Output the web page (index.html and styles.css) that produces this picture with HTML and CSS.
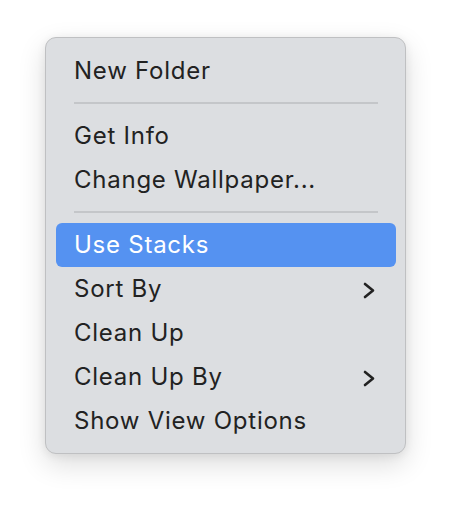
FILE: index.html
```html
<!DOCTYPE html>
<html lang="en">
<head>
<meta charset="utf-8">
<title>Context Menu</title>
<link rel="stylesheet" href="styles.css">
</head>
<body>
<div class="menu">
  <div class="item">New Folder</div>
  <div class="sep"></div>
  <div class="item">Get Info</div>
  <div class="item">Change Wallpaper...</div>
  <div class="sep"></div>
  <div class="item active">Use Stacks</div>
  <div class="item">Sort By
    <svg class="chev" width="12" height="17" viewBox="0 0 12 17"><polyline points="2,2 10,8.5 2,15" fill="none" stroke="currentColor" stroke-width="2.6" stroke-linecap="round" stroke-linejoin="round"/></svg>
  </div>
  <div class="item">Clean Up</div>
  <div class="item">Clean Up By
    <svg class="chev" width="12" height="17" viewBox="0 0 12 17"><polyline points="2,2 10,8.5 2,15" fill="none" stroke="currentColor" stroke-width="2.6" stroke-linecap="round" stroke-linejoin="round"/></svg>
  </div>
  <div class="item">Show View Options</div>
</div>
</body>
</html>
```

FILE: styles.css
```css
html, body {
  margin: 0;
  padding: 0;
  background: #ffffff;
}
body {
  box-sizing: border-box;
  min-height: 508px;
  padding: 37px 0 0 45px;
  font-family: Inter, "Noto Sans", sans-serif;
}
.menu {
  box-sizing: border-box;
  width: 361px;
  height: 417px;
  background: #dcdee1;
  border: 1px solid #bfc0c2;
  border-radius: 11px;
  padding: 11px 9px 10px 10px;
  box-shadow: 0 10px 28px rgba(0, 0, 0, 0.14), 0 2px 10px rgba(0, 0, 0, 0.07);
}
.item {
  height: 44px;
  line-height: 44px;
  padding: 0 21px 0 18px;
  font-size: 24px;
  letter-spacing: 0.75px;
  color: #222222;
  border-radius: 6px;
  display: flex;
  align-items: center;
  justify-content: space-between;
  white-space: nowrap;
}
.item.active {
  background: #5592f1;
  color: #ffffff;
}
.chev {
  color: #222222;
  flex: none;
  margin-top: 2px;
}
.sep {
  height: 2px;
  background: #c4c6c9;
  margin: 9px 18px 10px 18px;
}
```
